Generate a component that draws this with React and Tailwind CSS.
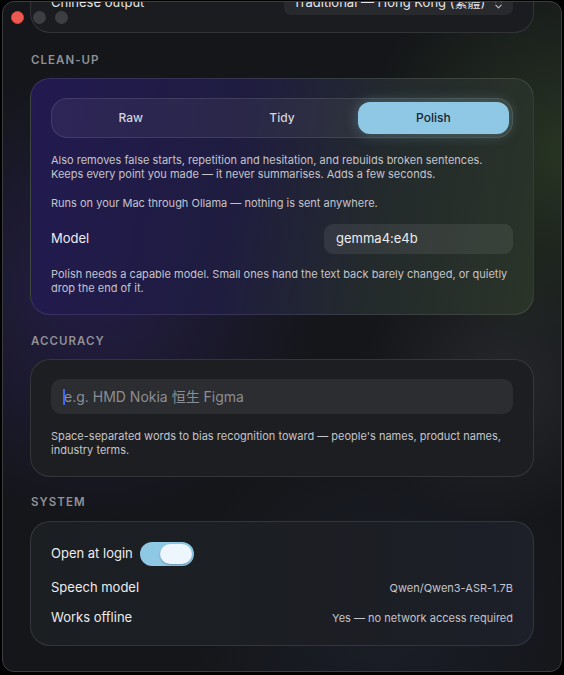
import { ChevronsUpDown } from "lucide-react";

const Label = ({ children, className = "" }) => (
  <div
    className={`text-[11.5px] leading-[14px] font-semibold tracking-[0.09em] text-[#8f9196] pl-[1px] ${className}`}
  >
    {children}
  </div>
);

const Segmented = () => {
  const options = ["Raw", "Tidy", "Polish"];
  const active = "Polish";
  return (
    <div className="h-[40px] rounded-[16px] border border-white/10 bg-white/[0.05] p-[3px] grid grid-cols-3">
      {options.map((opt) => (
        <div
          key={opt}
          className={
            opt === active
              ? "rounded-[12px] bg-[#8fc8e5] text-[#18242f] flex items-center justify-center text-[12px] font-medium shadow-[0_0_14px_rgba(143,200,229,0.35)]"
              : "flex items-center justify-center text-[12px] font-medium text-[#d4d4da]"
          }
        >
          {opt}
        </div>
      ))}
    </div>
  );
};

export default function App() {
  return (
    <div className="w-[564px] h-[675px] bg-black overflow-hidden font-[Inter,'Noto_Sans_CJK_TC','Noto_Sans_CJK_SC',sans-serif] antialiased">
      <div className="relative ml-[2px] mt-[1px] w-[560px] h-[671px] rounded-[12px] border border-[#3b3d41] overflow-hidden bg-[#141619] bg-[radial-gradient(circle_at_90px_290px,rgba(60,40,140,0.38),transparent_230px),radial-gradient(circle_at_560px_150px,rgba(70,100,50,0.38),transparent_200px),radial-gradient(circle_at_500px_380px,rgba(70,72,76,0.35),transparent_140px),radial-gradient(circle_at_380px_620px,rgba(40,44,70,0.35),transparent_200px)]">
        {/* traffic lights */}
        <div className="absolute top-[9px] left-[8px] flex gap-[9px] z-10">
          <div className="w-[13px] h-[13px] rounded-full bg-[#ee5a52] border border-[#d9463f]" />
          <div className="w-[13px] h-[13px] rounded-full bg-[#3c3e42]" />
          <div className="w-[13px] h-[13px] rounded-full bg-[#3c3e42]" />
        </div>

        <div className="px-[27px]">
          {/* scrolled-away card */}
          <div className="-mt-[33px] rounded-[20px] border border-white/10 bg-[#1a1c20] px-[20px] pt-[21px] pb-[17px] flex items-center justify-between">
            <span className="text-[13px] text-[#e4e4e8]">Chinese output</span>
            <div className="w-[229px] h-[24px] rounded-[7px] bg-white/[0.06] flex items-center justify-between pl-[9px] pr-[8px] text-[13px] text-[#e4e4e8]">
              <span>Traditional — Hong Kong (繁體)</span>
              <ChevronsUpDown size={13} strokeWidth={2} className="text-[#bfc0c4]" />
            </div>
          </div>

          <Label className="mt-[20px] mb-[11px]">CLEAN-UP</Label>

          <div className="rounded-[20px] border border-white/10 bg-[linear-gradient(100deg,#221a50_0%,#1f1c40_40%,#232a2c_68%,#2a3428_100%)] px-[20px] pt-[19px] pb-[19px]">
            <Segmented />
            <p className="mt-[15px] text-[11px] leading-[14px] text-[#c4c4cb]">
              Also removes false starts, repetition and hesitation, and rebuilds broken sentences.
              <br />
              Keeps every point you made — it never summarises. Adds a few seconds.
            </p>
            <p className="mt-[15px] text-[11px] leading-[14px] text-[#c4c4cb]">
              Runs on your Mac through Ollama — nothing is sent anywhere.
            </p>
            <div className="mt-[14px] flex items-center justify-between">
              <span className="text-[13px] text-[#ececee]">Model</span>
              <div className="w-[189px] h-[30px] rounded-[9px] bg-white/[0.08] flex items-center px-[12px] text-[13px] text-[#ececee]">
                gemma4:e4b
              </div>
            </div>
            <p className="mt-[13px] text-[11px] leading-[14px] text-[#c4c4cb]">
              Polish needs a capable model. Small ones hand the text back barely changed, or quietly
              drop the end of it.
            </p>
          </div>

          <Label className="mt-[19px] mb-[11px]">ACCURACY</Label>

          <div className="rounded-[20px] border border-white/10 bg-[#1c1e21] px-[20px] pt-[19px] pb-[19px]">
            <div className="relative h-[35px] rounded-[10px] bg-[#2b2d31] flex items-center pl-[13px] text-[14px] text-[#8c8e93]">
              <span className="absolute left-[12px] top-[10px] w-[2px] h-[16px] bg-[#3d66f2]" />
              e.g. HMD Nokia 恒生 Figma
            </div>
            <p className="mt-[15px] text-[11px] leading-[14px] text-[#c4c4cb]">
              Space-separated words to bias recognition toward — people's names, product names,
              industry terms.
            </p>
          </div>

          <Label className="mt-[18px] mb-[12px]">SYSTEM</Label>

          <div className="rounded-[20px] border border-white/10 bg-[linear-gradient(90deg,#1c1f22_0%,#1c1e24_60%,#1d1f29_100%)] px-[20px] pt-[19px] pb-[12px]">
            <div className="h-[26px] flex items-center gap-[7px]">
              <span className="text-[13px] text-[#ececee]">Open at login</span>
              <div className="w-[54px] h-[24px] rounded-full bg-[#8ec8e4] p-[2px] flex justify-end">
                <div className="w-[32px] h-[20px] rounded-full bg-[#eef6fd] shadow-[0_1px_2px_rgba(0,0,0,0.25)]" />
              </div>
            </div>
            <div className="mt-[6px] h-[30px] flex items-center justify-between">
              <span className="text-[13px] text-[#ececee]">Speech model</span>
              <span className="text-[11px] text-[#c4c4cb]">Qwen/Qwen3-ASR-1.7B</span>
            </div>
            <div className="h-[30px] flex items-center justify-between">
              <span className="text-[13px] text-[#ececee]">Works offline</span>
              <span className="text-[11px] text-[#c4c4cb]">Yes — no network access required</span>
            </div>
          </div>
        </div>
      </div>
    </div>
  );
}
